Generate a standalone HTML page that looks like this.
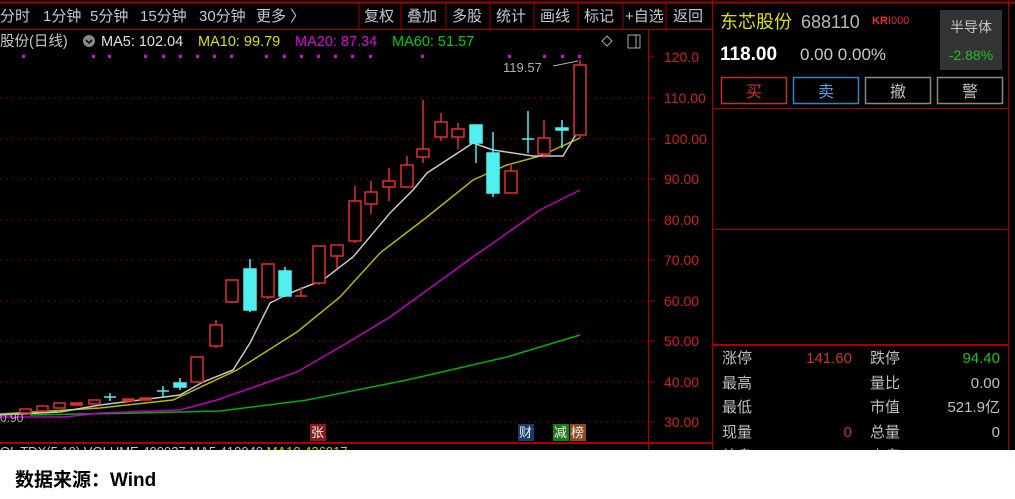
<!DOCTYPE html>
<html><head><meta charset="utf-8"><style>
body{margin:0;width:1015px;height:499px;overflow:hidden;background:#fff;font-family:"Liberation Sans","Noto Sans CJK SC",sans-serif}
svg{position:absolute;left:0;top:0}
.src{position:absolute;left:15px;top:465px;font-size:19px;font-weight:bold;color:#000;font-family:"Liberation Sans","Noto Sans CJK SC",sans-serif}
</style></head><body>
<svg width="1015" height="450" xmlns="http://www.w3.org/2000/svg" font-family="Liberation Sans, Noto Sans CJK SC, sans-serif">
<rect width="1015" height="450" fill="#000"/>
<line x1="0" y1="2.5" x2="1015" y2="2.5" stroke="#a00" stroke-width="2"/>
<line x1="0" y1="29.5" x2="712" y2="29.5" stroke="#a00"/>
<g stroke="#a00"><line x1="359" y1="3" x2="359" y2="29"/><line x1="401" y1="3" x2="401" y2="29"/><line x1="446" y1="3" x2="446" y2="29"/><line x1="490" y1="3" x2="490" y2="29"/><line x1="534" y1="3" x2="534" y2="29"/><line x1="578" y1="3" x2="578" y2="29"/><line x1="623" y1="3" x2="623" y2="29"/><line x1="666" y1="3" x2="666" y2="29"/></g>
<g fill="#c8c8c8" font-size="15"><text x="0" y="21">分时</text><text x="43" y="21">1分钟</text><text x="90" y="21">5分钟</text><text x="140" y="21">15分钟</text><text x="199" y="21">30分钟</text><text x="256" y="21">更多 〉</text>
<text x="364" y="21">复权</text><text x="407" y="21">叠加</text><text x="452" y="21">多股</text><text x="496" y="21">统计</text><text x="540" y="21">画线</text><text x="584" y="21">标记</text><text x="625" y="21">+自选</text><text x="673" y="21">返回</text></g>
<g font-size="14.5"><text x="0" y="46" fill="#c8c8c8">股份(日线)</text>
<circle cx="89" cy="41" r="6" fill="#888"/><path d="M86 40l3 3 3-3" stroke="#000" fill="none" stroke-width="1.5"/>
<text x="101" y="46" fill="#e0e0e0">MA5: 102.04</text><text x="198" y="46" fill="#e0e000">MA10: 99.79</text><text x="295" y="46" fill="#e000e0">MA20: 87.34</text><text x="392" y="46" fill="#00d000">MA60: 51.57</text></g>
<path d="M607 36l5 5-5 5-5-5z" stroke="#aaa" fill="none"/><rect x="628" y="35" width="12" height="13" stroke="#aaa" fill="none"/><line x1="636" y1="35" x2="636" y2="48" stroke="#aaa"/>
<g fill="#e000e0"><rect x="22" y="55" width="3" height="3"/><rect x="92" y="55" width="3" height="3"/><rect x="108" y="55" width="3" height="3"/><rect x="144" y="55" width="3" height="3"/><rect x="162" y="55" width="3" height="3"/><rect x="179" y="55" width="3" height="3"/><rect x="196" y="55" width="3" height="3"/><rect x="213" y="55" width="3" height="3"/><rect x="230" y="55" width="3" height="3"/><rect x="265" y="55" width="3" height="3"/><rect x="283" y="55" width="3" height="3"/><rect x="300" y="55" width="3" height="3"/><rect x="317" y="55" width="3" height="3"/><rect x="334" y="55" width="3" height="3"/><rect x="351" y="55" width="3" height="3"/><rect x="369" y="55" width="3" height="3"/><rect x="421" y="55" width="3" height="3"/><rect x="508" y="55" width="3" height="3"/><rect x="543" y="55" width="3" height="3"/><rect x="561" y="55" width="3" height="3"/><rect x="578" y="55" width="3" height="3"/></g>
<g stroke="#a00" stroke-dasharray="1.5,4.5"><line x1="0" y1="98" x2="648" y2="98"/><line x1="0" y1="139" x2="648" y2="139"/><line x1="0" y1="179" x2="648" y2="179"/><line x1="0" y1="220" x2="648" y2="220"/><line x1="0" y1="260" x2="648" y2="260"/><line x1="0" y1="301" x2="648" y2="301"/><line x1="0" y1="341" x2="648" y2="341"/><line x1="0" y1="382" x2="648" y2="382"/><line x1="0" y1="422" x2="648" y2="422"/></g>
<line x1="648.5" y1="30" x2="648.5" y2="450" stroke="#a00"/>
<line x1="712.5" y1="0" x2="712.5" y2="450" stroke="#a00"/>
<line x1="1008.5" y1="0" x2="1008.5" y2="450" stroke="#a00"/>
<line x1="0" y1="443" x2="712" y2="443" stroke="#a00" stroke-width="2"/>
<g stroke="#a00"><line x1="649" y1="57" x2="655" y2="57"/><line x1="649" y1="98" x2="655" y2="98"/><line x1="649" y1="139" x2="655" y2="139"/><line x1="649" y1="179" x2="655" y2="179"/><line x1="649" y1="220" x2="655" y2="220"/><line x1="649" y1="260" x2="655" y2="260"/><line x1="649" y1="301" x2="655" y2="301"/><line x1="649" y1="341" x2="655" y2="341"/><line x1="649" y1="382" x2="655" y2="382"/><line x1="649" y1="422" x2="655" y2="422"/></g>
<g fill="#d02020" font-size="14"><text x="664" y="62">120.0</text><text x="664" y="103">110.00</text><text x="664" y="144">100.00</text><text x="664" y="184">90.00</text><text x="664" y="225">80.00</text><text x="664" y="265">70.00</text><text x="664" y="306">60.00</text><text x="664" y="346">50.00</text><text x="664" y="387">40.00</text><text x="664" y="427">30.00</text></g>
<g fill="none" stroke-width="1.5">
<polyline stroke="#00b000" points="30,415 80,414 140,413 220,411 307,400 407,380 507,357 580,335"/>
<polyline stroke="#c000c0" points="0,417 65,417 100,413 180,410 217,400 297,372 347,343 390,317 473,257 540,210 580,190"/>
<polyline stroke="#b8b800" points="0,414 100,408 173,400 237,370 297,332 340,297 380,253 427,217 473,180 507,165 540,156 580,138"/>
<polyline stroke="#c8c8c8" points="0,415 60,412 100,405 140,400 180,395 203,382 233,370 250,343 270,303 290,293 323,280 353,257 390,213 413,190 427,173 473,143 493,150 533,156 563,156 578,131"/>
</g>
<g stroke="#e03030" fill="#000" stroke-width="1.5">
<rect x="20" y="409" width="11" height="4"/><rect x="37" y="406" width="11" height="5"/><rect x="54" y="403" width="11" height="5"/><rect x="71" y="403" width="11" height="2" fill="#e03030"/><rect x="89" y="400" width="11" height="4"/><rect x="123" y="399" width="11" height="2" fill="#e03030"/><rect x="140" y="398" width="11" height="2" fill="#e03030"/>
<rect x="191" y="357" width="12" height="25"/>
<line x1="216" y1="320" x2="216" y2="348"/><rect x="210" y="325" width="12" height="21"/>
<line x1="232" y1="280" x2="232" y2="303"/><rect x="226" y="280" width="12" height="22"/>
<line x1="268" y1="264" x2="268" y2="299"/><rect x="262" y="264" width="12" height="33"/>
<line x1="301" y1="287" x2="301" y2="297"/><line x1="295" y1="296" x2="307" y2="296"/>
<line x1="319" y1="246" x2="319" y2="285"/><rect x="313" y="246" width="12" height="37"/>
<line x1="337" y1="245" x2="337" y2="268"/><rect x="331" y="245" width="12" height="11"/>
<line x1="355" y1="186" x2="355" y2="243"/><rect x="349" y="201" width="12" height="40"/>
<line x1="371" y1="181" x2="371" y2="214"/><rect x="365" y="192" width="12" height="12"/>
<line x1="389" y1="168" x2="389" y2="201"/><rect x="383" y="181" width="12" height="6"/>
<line x1="407" y1="156" x2="407" y2="187"/><rect x="401" y="165" width="12" height="22"/>
<line x1="423" y1="100" x2="423" y2="163"/><rect x="417" y="149" width="12" height="8"/>
<line x1="441" y1="113" x2="441" y2="141"/><rect x="435" y="122" width="12" height="15"/>
<line x1="458" y1="123" x2="458" y2="149"/><rect x="452" y="129" width="12" height="8"/>
<line x1="511" y1="164" x2="511" y2="193"/><rect x="505" y="171" width="12" height="22"/>
<line x1="544" y1="120" x2="544" y2="158"/><rect x="538" y="138" width="12" height="16"/>
<line x1="580" y1="60" x2="580" y2="138"/><rect x="574" y="65" width="12" height="70"/>
</g>
<g stroke="#50f0f0" fill="#50f0f0" stroke-width="1.5">
<line x1="110" y1="393" x2="110" y2="401"/><line x1="104" y1="397" x2="116" y2="397"/>
<line x1="163" y1="386" x2="163" y2="397"/><line x1="157" y1="391" x2="169" y2="391"/>
<line x1="180" y1="378" x2="180" y2="390"/><rect x="174" y="383" width="12" height="4"/>
<line x1="250" y1="259" x2="250" y2="312"/><rect x="244" y="269" width="12" height="41"/>
<line x1="285" y1="267" x2="285" y2="297"/><rect x="279" y="271" width="12" height="25"/>
<line x1="476" y1="125" x2="476" y2="163"/><rect x="470" y="125" width="12" height="18"/>
<line x1="493" y1="132" x2="493" y2="197"/><rect x="487" y="153" width="12" height="40"/>
<line x1="528" y1="111" x2="528" y2="153"/><line x1="522" y1="139" x2="534" y2="139"/>
<line x1="562" y1="120" x2="562" y2="148"/><rect x="556" y="128" width="12" height="2"/>
</g>
<text x="503" y="72" fill="#b0b0b0" font-size="13">119.57</text>
<line x1="553" y1="66" x2="578" y2="61" stroke="#b0b0b0"/>
<text x="0" y="422" fill="#b0b0b0" font-size="12">0.90</text>
<rect x="310" y="424" width="16" height="17" fill="#8a1a1a"/><text x="311" y="437" fill="#eee" font-size="13">张</text>
<rect x="518" y="424" width="16" height="17" fill="#1a3a6a"/><text x="519" y="437" fill="#eee" font-size="13">财</text>
<rect x="553" y="424" width="16" height="17" fill="#1a7a1a"/><text x="554" y="437" fill="#eee" font-size="13">减</text>
<rect x="570" y="424" width="16" height="17" fill="#8a4a1a"/><text x="571" y="437" fill="#eee" font-size="13">榜</text>
<text x="0" y="456" fill="#c8c8c8" font-size="13">OL TDX(5,10) VOLUME 400927 MA5 410040 <tspan fill="#d0d000">MA10 436917</tspan></text>
<line x1="712" y1="108.5" x2="1008" y2="108.5" stroke="#a00"/>
<line x1="712" y1="229.5" x2="1008" y2="229.5" stroke="#a00"/>
<line x1="712" y1="345" x2="1008" y2="345" stroke="#a00" stroke-width="2"/>
<text x="720" y="28" fill="#e0e000" font-size="18">东芯股份</text>
<text x="801" y="28" fill="#b8b8b8" font-size="18">688110</text>
<text x="872" y="24" fill="#e03030" font-size="11" font-weight="bold">KR<tspan font-weight="normal">I000</tspan></text>
<text x="720" y="60" fill="#fff" font-size="19" font-weight="bold">118.00</text>
<text x="800" y="60" fill="#c8c8c8" font-size="17">0.00  0.00%</text>
<rect x="940" y="10" width="62" height="60" fill="#333"/>
<text x="971" y="32" fill="#c8c8c8" font-size="14" text-anchor="middle">半导体</text>
<text x="971" y="60" fill="#20c020" font-size="14" text-anchor="middle">-2.88%</text>
<rect x="721.5" y="77.5" width="65" height="26" fill="none" stroke="#c03030" stroke-width="1.5"/><text x="754" y="97" fill="#e03030" font-size="16" text-anchor="middle">买</text>
<rect x="793.5" y="77.5" width="65" height="26" fill="none" stroke="#3a80c0" stroke-width="1.5"/><text x="826" y="97" fill="#50a0e0" font-size="16" text-anchor="middle">卖</text>
<rect x="865.5" y="77.5" width="65" height="26" fill="none" stroke="#888" stroke-width="1.5"/><text x="898" y="97" fill="#c0c0c0" font-size="16" text-anchor="middle">撤</text>
<rect x="937.5" y="77.5" width="65" height="26" fill="none" stroke="#888" stroke-width="1.5"/><text x="970" y="97" fill="#c0c0c0" font-size="16" text-anchor="middle">警</text>
<g font-size="15" fill="#c0c0c0">
<text x="722" y="363">涨停</text><text x="852" y="363" fill="#d03030" text-anchor="end">141.60</text><text x="870" y="363">跌停</text><text x="1000" y="363" fill="#20c020" text-anchor="end">94.40</text>
<text x="722" y="388">最高</text><text x="870" y="388">量比</text><text x="1000" y="388" text-anchor="end">0.00</text>
<text x="722" y="412">最低</text><text x="870" y="412">市值</text><text x="1000" y="412" text-anchor="end">521.9亿</text>
<text x="722" y="437">现量</text><text x="852" y="437" fill="#d03030" text-anchor="end">0</text><text x="870" y="437">总量</text><text x="1000" y="437" text-anchor="end">0</text>
<text x="722" y="461">外盘</text><text x="852" y="461" fill="#d03030" text-anchor="end">0</text><text x="870" y="461">内盘</text><text x="1000" y="461" fill="#20c020" text-anchor="end">0</text>
</g>
</svg>
<div class="src">数据来源：Wind</div>
</body></html>
